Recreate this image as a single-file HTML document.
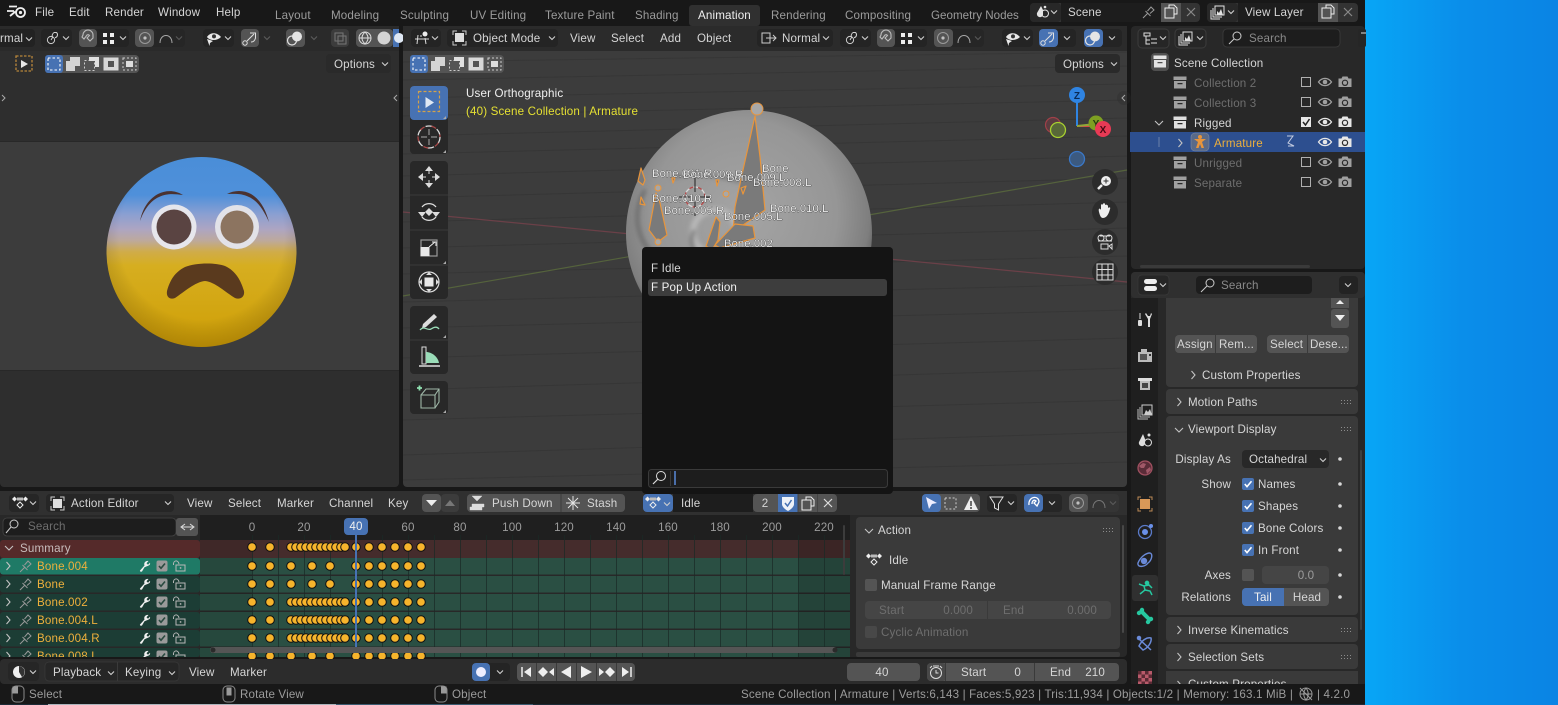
<!DOCTYPE html>
<html><head><meta charset="utf-8"><title>Blender</title>
<style>
html,body{margin:0;padding:0;width:1558px;height:705px;overflow:hidden;background:#181818}
svg{display:block}
text{font-family:"Liberation Sans",sans-serif;font-size:11.6px;fill:#d6d6d6;letter-spacing:.15px}
.d{fill:#8a8a8a}.w{fill:#f0f0f0}.m{fill:#9c9c9c}.g{fill:#6e6e6e}.o{fill:#eeb03c}.c{text-anchor:middle}.e{text-anchor:end}
.b{font-size:11.2px;fill:#ececec;stroke:#2a2a2a;stroke-width:.6px;paint-order:stroke;letter-spacing:.12px}
</style></head><body>
<svg width="1558" height="705" viewBox="0 0 1558 705" xmlns="http://www.w3.org/2000/svg">
<defs>
<filter id="bl2" x="-20%" y="-20%" width="140%" height="140%"><feGaussianBlur stdDeviation="2"/></filter>
<filter id="bl1" x="-20%" y="-20%" width="140%" height="140%"><feGaussianBlur stdDeviation=".6"/></filter>
<linearGradient id="win" x1="0" x2="1" y1="0" y2="0"><stop offset="0" stop-color="#08a6f6"/><stop offset=".5" stop-color="#0a8eea"/><stop offset="1" stop-color="#0a84e4"/></linearGradient>
<radialGradient id="sph" cx=".48" cy=".42" r=".58"><stop offset="0" stop-color="#a4a4a4"/><stop offset=".65" stop-color="#969696"/><stop offset=".88" stop-color="#7e7e7e"/><stop offset="1" stop-color="#505050"/></radialGradient>
<linearGradient id="emo" x1="0" x2="0" y1="0" y2="1"><stop offset="0" stop-color="#4a8ed8"/><stop offset=".2" stop-color="#4f90da"/><stop offset=".3" stop-color="#8a9fd2"/><stop offset=".38" stop-color="#ada5c2"/><stop offset=".44" stop-color="#bda99c"/><stop offset=".5" stop-color="#d0ac48"/><stop offset=".57" stop-color="#d6ae20"/><stop offset="1" stop-color="#cf9f06"/></linearGradient>
<radialGradient id="emos" cx=".5" cy=".42" r=".58"><stop offset=".75" stop-color="#000" stop-opacity="0"/><stop offset="1" stop-color="#3a2000" stop-opacity=".2"/></radialGradient>

<path id="cd" d="M-3-1.500 0 1.500 3-1.500" fill="none" stroke="#d0d0d0" stroke-width="1.100"/>
<path id="cr" d="M-1.500-4 2 0-1.500 4" fill="none" stroke="#c4c4c4" stroke-width="1.100"/>
<path id="cdl" d="M-4-2 0 2 4-2" fill="none" stroke="#c4c4c4" stroke-width="1.100"/>
<circle id="k" r="4.300" fill="#f6b42c" stroke="#111" stroke-width="1"/>
<g id="dense"><use href="#k" x="291"/><use href="#k" x="296"/><use href="#k" x="301"/><use href="#k" x="306"/><use href="#k" x="311"/><use href="#k" x="316"/><use href="#k" x="321"/><use href="#k" x="326"/><use href="#k" x="331"/><use href="#k" x="336"/><use href="#k" x="341"/><use href="#k" x="345"/></g>
<g id="tail"><use href="#k" x="252"/><use href="#k" x="270"/><use href="#k" x="356"/><use href="#k" x="369"/><use href="#k" x="382"/><use href="#k" x="395"/><use href="#k" x="408"/><use href="#k" x="421"/></g>
<g id="sparse"><use href="#k" x="291"/><use href="#k" x="312"/><use href="#k" x="330"/></g>
<g id="col"><rect x="-6.500" y="-6.500" width="13" height="3.500" fill="currentColor"/><path d="M-6-2H6V5.500H-6Z M-2.500 0V1.300H2.500V0Z" fill="currentColor" fill-rule="evenodd"/></g>
<g id="eye"><path d="M-6.500 0C-3-4.800 3-4.800 6.500 0 3 4.800-3 4.800-6.500 0Z" fill="none" stroke="currentColor" stroke-width="1.300"/><circle r="2.300" fill="currentColor"/></g>
<g id="cam"><path d="M-6.500-3.500H-3.500L-2.500-5.500H2.500L3.500-3.500H6.500V5H-6.500Z" fill="currentColor"/><circle cy=".8" r="3.200" fill="#2a2a2a"/><circle cy=".8" r="2" fill="currentColor"/></g>
<g id="wr"><path d="M-5 4.500-.5-.5C-1.500-3 .5-5.500 3.500-5L1.500-2.800 3-1.200 5-3.300C5.700-.5 3-.5-.5 1.300L-3 5.500C-4 6-5.500 5.500-5 4.500Z" fill="#f0f0f0"/></g>
<g id="pin"><path d="M-6 6-1.500 1.500M-3.500-1 1.500 4M-1.500-1 2-5 5-2 1 1.500" fill="none" stroke="#9a9a9a" stroke-width="1"/></g>
<g id="lk"><rect x="-2" y="-1" width="9" height="6" fill="none" stroke="#b8b8b8" stroke-width="1"/><path d="M-4.500-1C-5-6 0-6.500 1-2" fill="none" stroke="#b8b8b8" stroke-width="1"/><rect x="1.800" y="1.200" width="1.500" height="1.500" fill="#b8b8b8"/></g>
<g id="chk"><rect x="-5.500" y="-5.500" width="11" height="11" rx="2" fill="#9a9a9a"/><path d="M-3 0-1 2.300 3-2.500" fill="none" stroke="#2a4a40" stroke-width="1.600"/></g>
<g id="cb"><rect x="-6" y="-6" width="12" height="12" rx="2" fill="#4772b3"/><path d="M-3.200 0-1 2.600 3.500-2.800" fill="none" stroke="#fff" stroke-width="1.600"/></g>
<g id="grip" fill="#8c8c8c"><rect x="0" y="0" width="1" height="1"/><rect x="3" y="0" width="1" height="1"/><rect x="6" y="0" width="1" height="1"/><rect x="9" y="0" width="1" height="1"/><rect x="0" y="3" width="1" height="1"/><rect x="3" y="3" width="1" height="1"/><rect x="6" y="3" width="1" height="1"/><rect x="9" y="3" width="1" height="1"/></g>
<g id="link"><circle cx="-2" cy="2" r="3.600" fill="none" stroke="#d0d0d0"/><path d="M1-5.500H3.500A3 3 0 0 1 2-.3" fill="none" stroke="#d0d0d0"/><path d="M-2 2-.5-.5A4 4 0 0 1 1-5.500" fill="none" stroke="#d0d0d0"/></g>
<g id="mag"><path d="M-5-3A5 5 0 0 1 5-3L5 0 2 3-1 0 1.500-2.500A2 2 0 0 0-1-3L-4 1-6-1Z" fill="none" stroke="#bdbdbd" stroke-width="1.100"/></g>
<g id="grid4"><rect x="-5" y="-5" width="4" height="4" fill="#eee"/><rect x="2" y="-5" width="4" height="4" fill="#eee"/><rect x="-5" y="2" width="4" height="4" fill="#eee"/><rect x="2" y="2" width="4" height="4" fill="#eee"/></g>
<g id="prop"><circle r="5.500" fill="none" stroke="#9a9a9a"/><circle r="1.600" fill="#c0c0c0"/></g>
<path id="curve" d="M-6 5C-6-5 6-5 6 5" fill="none" stroke="#a8a8a8"/>
<path id="curved" d="M-6 5C-6-5 6-5 6 5" fill="none" stroke="#777"/>
<g id="vis"><path d="M-7-1C-4-6 3-6 7-1 3 3-4 3-7-1Z" fill="#e8e8e8"/><circle cy="-1.600" r="2" fill="#333"/><path d="M-7 1-1 3-4 5-4.500 8Z" fill="#e8e8e8"/></g>
<g id="bn"><circle cx="-5" cy="5" r="2.200" fill="none" stroke="#e0e0e0"/><path d="M-3 3 4-4M0-5H5.500V.5M1 4C4 4 5 2 5.500 0" fill="none" stroke="#e0e0e0"/></g>
<g id="ovl"><circle cx="2" cy="-1.500" r="5" fill="#e4e4e4"/><circle cx="-3" cy="2.500" r="4.500" fill="none" stroke="#e4e4e4" stroke-width="1.200"/></g>
<g id="dash"><rect x="-6" y="-6" width="12" height="12" fill="none" stroke="#fff" stroke-dasharray="2.500 2" stroke-width="1.100"/></g>
<g id="keys"><path d="M-8-2-5.500-4.500-3-2-5.500.5ZM8-2 5.500-4.500 3-2 5.500.5Z" fill="#eee"/><rect x="-3" y="-3.500" width="6" height="3" fill="#bbb"/><path d="M0 1 3 4 0 7-3 4Z" fill="none" stroke="#eee"/></g>
<g id="copy"><rect x="-5" y="-3" width="9" height="10" fill="none" stroke="#eee"/><path d="M-1-3V-6H4L7-3V3H4" fill="none" stroke="#eee"/></g>
<path id="xx" d="M-4-4 4 4M4-4-4 4" stroke="#ddd" stroke-width="1.200" fill="none"/>
</defs>

<!-- base -->
<rect width="1558" height="705" fill="#181818"/>
<rect x="1365" width="193" height="705" fill="url(#win)"/>
<rect x="0" y="704" width="1365" height="1" fill="#1c2a36"/><rect x="48" y="704" width="288" height="1" fill="#aab4bc"/><rect x="336" y="704" width="197" height="1" fill="#3a5a70"/>

<!-- top bar -->
<g fill="none" stroke="#eee"><circle cx="20.500" cy="12.500" r="4.500" stroke-width="1.800"/><path d="M9 6.500H17M7 11H14M10 16 15.500 11.500" stroke-width="1.800"/></g><circle cx="20.500" cy="12.500" r="1.600" fill="#eee"/>
<text x="35" y="16">File</text><text x="69" y="16">Edit</text><text x="105" y="16">Render</text><text x="158" y="16">Window</text><text x="216" y="16">Help</text>
<rect x="689" y="5" width="71" height="21" rx="3" fill="#303030"/>
<text class="m" x="275" y="19">Layout</text><text class="m" x="331" y="19">Modeling</text><text class="m" x="400" y="19">Sculpting</text><text class="m" x="470" y="19">UV Editing</text><text class="m" x="545" y="19">Texture Paint</text><text class="m" x="635" y="19">Shading</text><text class="w" x="698" y="19">Animation</text><text class="m" x="771" y="19">Rendering</text><text class="m" x="845" y="19">Compositing</text><text class="m" x="931" y="19" textLength="88">Geometry Nodes</text>
<!-- scene -->
<rect x="1030" y="3" width="170" height="19" rx="4" fill="#333"/>
<rect x="1030" y="3" width="31" height="19" rx="4" fill="#282828"/>
<g transform="translate(1042,12)"><path d="M-1-6-5 1A3 3 0 0 0 1 3L1-2Z" fill="#e4e4e4"/><circle cx="3" cy="1.500" r="3.500" fill="none" stroke="#e4e4e4"/><circle cx="3" cy="-5" r="1.300" fill="#e4e4e4"/></g><use href="#cd" x="1054" y="12"/>
<rect x="1061" y="3" width="100" height="19" fill="#1d1d1d"/><text x="1068" y="16">Scene</text>
<use href="#pin" x="1149" y="12"/>
<rect x="1161" y="3" width="20" height="19" fill="#545454"/><use href="#copy" x="1170" y="11"/><use href="#xx" x="1191" y="12" opacity=".5"/>
<rect x="1207" y="3" width="151" height="19" rx="4" fill="#333"/>
<rect x="1207" y="3" width="31" height="19" rx="4" fill="#282828"/>
<g transform="translate(1218,12)"><rect x="-3" y="-6" width="9" height="9" fill="none" stroke="#e4e4e4"/><path d="M-1 3-1-1 1 1 3-3 5 3Z" fill="#e4e4e4"/><path d="M-5-4V5H4M-7-2V7H2" fill="none" stroke="#e4e4e4"/></g><use href="#cd" x="1231" y="12"/>
<rect x="1238" y="3" width="80" height="19" fill="#1d1d1d"/><text x="1245" y="16">View Layer</text>
<rect x="1318" y="3" width="20" height="19" fill="#545454"/><use href="#copy" x="1327" y="11"/><use href="#xx" x="1348" y="12" opacity=".5"/>

<!-- left viewport -->
<rect x="0" y="26" width="399" height="461" rx="4" fill="#2e2e2e"/>
<rect x="0" y="26" width="399" height="25" fill="#2a2a2a"/>
<rect x="0" y="141" width="399" height="230" fill="#3c3c3c"/>
<rect x="0" y="141" width="399" height="1" fill="#282828"/>
<rect x="0" y="370" width="399" height="1" fill="#282828"/>
<!-- left header -->
<rect x="-4" y="29" width="39" height="18" rx="4" fill="#222"/><text x="0" y="42">rmal</text><use href="#cd" x="29" y="39"/>
<rect x="41" y="29" width="31" height="18" rx="4" fill="#242424"/><use href="#link" x="53" y="38"/><use href="#cd" x="66" y="38"/>
<rect x="79" y="29" width="50" height="18" rx="4" fill="#242424"/><rect x="79" y="29" width="18" height="18" rx="4" fill="#545454"/><use href="#mag" x="88" y="38"/><use href="#grid4" x="108" y="38"/><use href="#cd" x="123" y="38"/>
<rect x="135" y="29" width="50" height="18" rx="4" fill="#262626"/><rect x="135" y="29" width="19" height="18" rx="4" fill="#545454"/><use href="#prop" x="145" y="38"/><use href="#curve" x="166" y="38"/><use href="#cd" x="179" y="38" opacity=".3"/>
<rect x="203" y="29" width="31" height="18" rx="4" fill="#242424"/><use href="#vis" x="214" y="38"/><use href="#cd" x="228" y="38"/>
<rect x="241" y="29" width="44" height="18" rx="4" fill="#2a2a2a"/><rect x="241" y="29" width="18" height="18" rx="4" fill="#545454"/><use href="#bn" x="250" y="38"/><use href="#cd" x="267" y="38" opacity=".3"/>
<rect x="286" y="29" width="37" height="18" rx="4" fill="#2a2a2a"/><rect x="286" y="29" width="19" height="18" rx="4" fill="#545454"/><use href="#ovl" x="295" y="38"/><use href="#cd" x="314" y="38" opacity=".3"/>
<rect x="331" y="29" width="18" height="18" rx="4" fill="#3c3c3c"/><rect x="335" y="33" width="8" height="8" fill="none" stroke="#777"/><rect x="338" y="36" width="8" height="8" fill="none" stroke="#777"/>
<rect x="356" y="29" width="37" height="18" rx="4" fill="#545454"/><circle cx="365" cy="38" r="6" fill="none" stroke="#ddd"/><path d="M359 38H371M365 32C361 36 361 40 365 44 369 40 369 36 365 32" fill="none" stroke="#ddd"/><circle cx="384" cy="38" r="6.500" fill="#d4d4d4"/>
<rect x="393" y="29" width="6" height="18" fill="#4772b3"/><circle cx="399" cy="38" r="5" fill="#dfe8f4"/>
<rect x="16" y="56" width="16" height="15" fill="none" stroke="#b8863a" stroke-dasharray="2.500 1.500" stroke-width="1.300"/><path d="M21 60 28 64 21 68Z" fill="#e8e8e8"/>
<!-- select modes left -->
<g id="modes"><rect x="45" y="55" width="94" height="18" rx="4" fill="#545454"/><rect x="45" y="55" width="18" height="18" rx="3" fill="#4772b3"/><use href="#dash" x="54" y="64"/><rect x="66" y="61" width="9" height="10" fill="#d4d4d4"/><rect x="70" y="57" width="10" height="9" fill="#d4d4d4"/><rect x="84.500" y="60.500" width="10" height="10" fill="none" stroke="#ccc" stroke-dasharray="2 2"/><path d="M89 57H99V67H95V61H89Z" fill="#e0e0e0"/><rect x="103.500" y="57.500" width="15" height="13" fill="#d8d8d8"/><rect x="108" y="61" width="6" height="6" fill="#545454"/><rect x="123" y="58" width="13" height="12" fill="none" stroke="#ccc" stroke-dasharray="2 2"/><rect x="126" y="61" width="7" height="6" fill="#ddd"/></g>
<rect x="326" y="54" width="65" height="19" rx="4" fill="#2a2a2a"/><text x="334" y="68">Options</text><use href="#cd" x="385" y="64"/>
<path d="M2 95 5 98 2 101" fill="none" stroke="#aaa"/><path d="M397 95 394 98 397 101" fill="none" stroke="#aaa"/>
<!-- emoji -->
<circle cx="201.500" cy="252" r="95" fill="url(#emo)"/><circle cx="201.500" cy="252" r="95" fill="url(#emos)"/>
<circle cx="174" cy="227" r="22.500" fill="#e6e6ec"/><circle cx="174" cy="227" r="17.500" fill="#5a4442"/>
<circle cx="237" cy="227" r="22" fill="#e2e2e8"/><circle cx="237" cy="227" r="16.500" fill="#8c7460"/>
<path d="M183 195C175 190 166 190 158 194 147 200 142 211 140 221 144 210 150 201 159 197 167 193 175 194 183 195Z" fill="#4a3230"/>
<path d="M227 194C234 190 244 190 251 194 261 200 266 211 269 222 264 211 258 201 249 197 241 193 234 194 227 194Z" fill="#4a3230"/>
<path d="M167 291C170 280 175 272 185 267 195 263 214 262 225 266 236 271 241 281 244 291 245 297 240 300 235 298 225 292 215 282 205 281 195 282 184 292 175 298 170 300 166 297 167 291Z" fill="#5a3a1e"/>

<!-- main viewport -->
<rect x="403" y="26" width="724" height="461" rx="4" fill="#3c3c3c"/>
<g stroke="#353535" stroke-width="1" opacity=".8"><path d="M403 62 1127 52M403 80 1127 66M403 98 1127 84M403 116 1127 100M403 136 1127 118M403 154 1127 136M403 176 1127 156M403 198 1127 178M403 222 1127 202M403 248 1127 228M403 274 1127 256M403 302 1127 284M403 328 1127 310M403 358 1127 338M403 390 1127 368M403 420 1127 400M403 455 1127 432M403 480 1127 462"/></g>
<path d="M403 212 1127 282" stroke="#6b4048" stroke-width="1.200"/><path d="M403 296 1127 170" stroke="#55633c" stroke-width="1.200"/>
<rect x="403" y="26" width="724" height="25" fill="#2b2b2b"/>
<!-- sphere -->
<circle cx="749" cy="233" r="123" fill="url(#sph)"/>
<g filter="url(#bl2)" fill="none"><path d="M645 190C632 212 636 236 652 254" stroke="#6e6e6e" stroke-width="4"/><path d="M672 178C690 172 720 175 740 182" stroke="#777" stroke-width="3"/><ellipse cx="715" cy="232" rx="22" ry="22" stroke="#b8b8b8" stroke-width="6"/><path d="M694 230C690 240 692 248 698 255" stroke="#707070" stroke-width="3"/></g>
<!-- bones -->
<g fill="#7a7a7a" stroke="#e8953c" stroke-width="1.200" stroke-linejoin="round">
<path d="M755 116 743 170 735 207 733 232 765 210 760 157Z"/>
<path d="M715 245 735 224 753 226 755 238 720 248Z"/>
<path d="M656 193 649 230 658 242 667 235 660 203Z"/>
<path d="M706 246 716 217 720 222 718 240 712 250Z"/>
<path d="M641 168 638 181 643 185 645 180Z"/>
<path d="M641 197 640 204 645 205Z"/>
<path d="M672 178 673 183 675 178ZM716 180 717 186 719 180ZM741 188 743 194 746 186Z"/>
</g>
<g fill="#a8a8a8" stroke="#e8953c"><circle cx="757" cy="109" r="6"/><circle cx="658" cy="188" r="3"/><circle cx="658" cy="242" r="3"/><circle cx="726" cy="194" r="3"/></g>
<circle cx="695" cy="197" r="10" fill="none" stroke="#d8d8d8" stroke-width="1.300" stroke-dasharray="5 4"/><circle cx="695" cy="197" r="10" fill="none" stroke="#b84848" stroke-width="1.300" stroke-dasharray="4 5" stroke-dashoffset="4"/>
<path d="M695 178V192M695 202V216M679 197H690M700 197H711" stroke="#222"/>
<text class="b" x="652" y="177">Bone.001.R</text><text class="b" x="683" y="178">Bone.009.R</text><text class="b" x="727" y="181">Bone.009.L</text><text class="b" x="762" y="172">Bone</text><text class="b" x="753" y="186">Bone.008.L</text>
<text class="b" x="652" y="202">Bone.010.R</text><text class="b" x="664" y="214">Bone.005.R</text><text class="b" x="770" y="212">Bone.010.L</text><text class="b" x="724" y="220">Bone.005.L</text><text class="b" x="724" y="247">Bone.002</text>
<!-- main header -->
<rect x="411" y="29" width="30" height="18" rx="4" fill="#242424"/><g transform="translate(422,38)"><circle cx="3" cy="-4" r="2.500" fill="#eee"/><path d="M-7 1H7M-4-3-5 6M3 0 4 6M-2-2H0" stroke="#ddd" fill="none"/></g><use href="#cd" x="435" y="38"/>
<rect x="447" y="29" width="111" height="18" rx="4" fill="#242424"/><rect x="455" y="33" width="9" height="9" fill="#ddd"/><path d="M453 35V31H457M462 31H466V35M466 41V45H462M457 45H453V41" fill="none" stroke="#ccc"/><text x="473" y="42">Object Mode</text><use href="#cd" x="552" y="38"/>
<text x="570" y="42">View</text><text x="611" y="42">Select</text><text x="660" y="42">Add</text><text x="697" y="42">Object</text>
<rect x="757" y="29" width="76" height="18" rx="4" fill="#242424"/><path d="M762 33H770V43H762ZM766 38H776M773 35 776 38 773 41" fill="none" stroke="#ccc"/><text x="782" y="42">Normal</text><use href="#cd" x="826" y="38"/>
<rect x="840" y="29" width="31" height="18" rx="4" fill="#242424"/><use href="#link" x="852" y="38"/><use href="#cd" x="865" y="38"/>
<rect x="877" y="29" width="50" height="18" rx="4" fill="#242424"/><rect x="877" y="29" width="18" height="18" rx="4" fill="#545454"/><use href="#mag" x="886" y="38"/><use href="#grid4" x="906" y="38"/><use href="#cd" x="921" y="38"/>
<rect x="934" y="29" width="50" height="18" rx="4" fill="#262626"/><rect x="934" y="29" width="19" height="18" rx="4" fill="#545454"/><use href="#prop" x="943" y="38"/><use href="#curve" x="964" y="38"/><use href="#cd" x="978" y="38" opacity=".3"/>
<rect x="1002" y="29" width="31" height="18" rx="4" fill="#242424"/><use href="#vis" x="1013" y="38"/><use href="#cd" x="1027" y="38"/>
<rect x="1039" y="29" width="37" height="18" rx="4" fill="#242424"/><rect x="1039" y="29" width="19" height="18" rx="4" fill="#4772b3"/><use href="#bn" x="1048" y="38"/><use href="#cd" x="1067" y="38"/>
<rect x="1084" y="29" width="38" height="18" rx="4" fill="#242424"/><rect x="1084" y="29" width="19" height="18" rx="4" fill="#4772b3"/><use href="#ovl" x="1093" y="38"/><use href="#cd" x="1112" y="38"/>
<use href="#modes" x="365"/>
<rect x="1055" y="54" width="65" height="19" rx="4" fill="#2a2a2a"/><text x="1063" y="68">Options</text><use href="#cd" x="1114" y="64"/>
<!-- tools -->
<rect x="410" y="86" width="38" height="68" rx="4" fill="#282828"/><rect x="410" y="86" width="38" height="34" rx="4" fill="#4772b3"/>
<rect x="418.500" y="91.500" width="21" height="20" fill="none" stroke="#d4a24a" stroke-dasharray="3 2" stroke-width="1.200"/><path d="M425.500 97 434 102.500 425.500 108Z" fill="#dfe8f4"/>
<g transform="translate(429,137)"><circle r="11" fill="none" stroke="#ddd" stroke-width="1.300" stroke-dasharray="7 5"/><circle r="11" fill="none" stroke="#a84848" stroke-width="1.300" stroke-dasharray="5 7" stroke-dashoffset="6"/><path d="M-8 0H-2M2 0H8M0-8V-2M0 2V8" stroke="#aaa"/></g>
<rect x="410" y="161" width="38" height="138" rx="4" fill="#282828"/>
<path d="M410 195H448M410 230H448M410 265H448" stroke="#3a3a3a"/>
<g transform="translate(429,177)" fill="#ddd"><path d="M0-11 4-6H-4ZM0 11 4 6H-4ZM-11 0-6-4V4ZM11 0 6-4V4Z"/><path d="M-6 0H-3M3 0H6M0-6V-3M0 3V6" stroke="#ddd"/></g>
<g transform="translate(429,212)"><path d="M-7-5A9 9 0 0 1 7-5M7 5A9 9 0 0 1-7 5" fill="none" stroke="#ddd" stroke-width="1.300"/><path d="M-11 0-7 5-3 0ZM11 0 7 5 3 0ZM0-4 4 0 0 4-4 0Z" fill="#ddd"/></g>
<g transform="translate(429,248)"><rect x="-8" y="-8" width="16" height="16" fill="none" stroke="#999" stroke-width="1.200"/><rect x="-8.500" y="-1" width="9" height="9" fill="#e8e8e8"/><path d="M0-1 6-6M3-6H7V-2" stroke="#eee" fill="none"/></g>
<g transform="translate(429,282)"><circle r="10" fill="none" stroke="#ddd" stroke-width="1.200"/><rect x="-4.500" y="-4.500" width="9" height="9" fill="#e8e8e8"/><path d="M0-10 3-7H-3ZM0 10 3 7H-3ZM-10 0-7-3V3ZM10 0 7-3V3Z" fill="#ddd"/></g>
<rect x="410" y="306" width="38" height="68" rx="4" fill="#282828"/><path d="M410 340H448" stroke="#3a3a3a"/>
<g transform="translate(429,322)"><path d="M-6 2 5-8 8-5-3 5-7 6Z" fill="#ddd"/><path d="M-9 8C-5 3-2 9 2 7 5 5 8 4 10 7" fill="none" stroke="#9adcb8" stroke-width="1.300"/></g>
<g transform="translate(429,358)"><path d="M-7-11H-3V6H-7Z" fill="none" stroke="#ddd"/><path d="M-3-6C3-6 9-1 10 5H-3Z" fill="#9adcb8"/><path d="M-10 8H11" stroke="#ddd" stroke-width="1.500"/></g>
<rect x="410" y="381" width="38" height="33" rx="4" fill="#282828"/>
<g transform="translate(429,398)"><path d="M-8-3H6V10H-8ZM-8-3-3-9H10V4L6 10M6-3 10-9" fill="none" stroke="#9fb8a8" stroke-width="1.100"/><path d="M-12-10H-7M-9.500-12.500V-7.500" stroke="#8fe0b0" stroke-width="1.800"/></g>
<path d="M446 116V119H443ZM446 150V153H443ZM446 261V264H443ZM446 335V338H443ZM446 410V413H443Z" fill="#aaa"/>
<!-- overlay text -->
<text class="w" x="466" y="97">User Orthographic</text>
<text x="466" y="115" style="fill:#e5e033">(40) Scene Collection | Armature</text>
<!-- gizmo -->
<path d="M1077 96V126" stroke="#2f84e2" stroke-width="2"/><path d="M1077 126H1102" stroke="#d84848" stroke-width="2"/><path d="M1077 126 1096 124" stroke="#90a838" stroke-width="2"/>
<circle cx="1053" cy="125" r="7.500" fill="#5a3c40" stroke="#a04048" stroke-width="1.200"/><circle cx="1058" cy="130" r="7.500" fill="#586838" stroke="#a8d030" stroke-width="1.300"/>
<circle cx="1096" cy="123" r="7.500" fill="#7ea022"/><text x="1096" y="127" class="c" style="font-size:10px;fill:#2a3a10;font-weight:bold">Y</text>
<circle cx="1103" cy="129" r="8" fill="#e83a55"/><text x="1103" y="133" class="c" style="font-size:10px;fill:#4a0a14;font-weight:bold">X</text>
<circle cx="1077" cy="95" r="8" fill="#2f84e2"/><text x="1077" y="99" class="c" style="font-size:10px;fill:#0a2a55;font-weight:bold">Z</text>
<circle cx="1077" cy="159" r="7.500" fill="#3c5a80" stroke="#3a78c8" stroke-width="1.300"/>
<!-- nav buttons -->
<g fill="#2c2c2c"><circle cx="1105" cy="182" r="13"/><circle cx="1105" cy="212" r="13"/><circle cx="1105" cy="242" r="13"/><circle cx="1105" cy="272" r="13"/></g>
<circle cx="1106" cy="181" r="5" fill="#eee"/><path d="M1103.500 181H1108.500M1106 178.500V183.500" stroke="#333"/><path d="M1102 185 1098 189" stroke="#eee" stroke-width="2.500"/>
<path d="M1099 212C1098 208 1100 208 1101 210V205C1101 204 1103 204 1103 205V204C1103 203 1105 203 1105 204V205C1106 204 1108 205 1108 206V208C1109 207 1111 207 1110 209 1109 213 1107 218 1103 218 1101 218 1100 216 1099 212Z" fill="#eee"/>
<g fill="none" stroke="#ddd"><circle cx="1101" cy="238" r="3"/><circle cx="1109" cy="238" r="3"/><path d="M1098 241H1112M1100 236H1110"/><rect x="1101" y="244" width="7" height="5"/><path d="M1109 246 1112 244V249Z"/></g>
<g stroke="#ddd" fill="none"><rect x="1097" y="264" width="16" height="16"/><path d="M1102 264V280M1108 264V280M1097 269.500H1113M1097 275H1113"/></g>
<circle cx="1124" cy="98" r="7" fill="#2a2a2a" opacity=".3"/><path d="M1125 95 1122 98 1125 101" fill="none" stroke="#aaa"/>

<!-- outliner -->
<rect x="1131" y="26" width="234" height="243" rx="4" fill="#282828"/>
<rect x="1138" y="29" width="31" height="19" rx="4" fill="#262626" stroke="#3c3c3c"/><path d="M1144 33H1150V36H1144ZM1146 36V44H1150M1146 40H1150M1151 39H1157M1151 43H1157" stroke="#ddd" fill="none"/><use href="#cd" x="1163" y="38"/>
<rect x="1175" y="29" width="31" height="19" rx="4" fill="#262626" stroke="#3c3c3c"/><g transform="translate(1186,38)"><rect x="-3" y="-6" width="9" height="9" fill="none" stroke="#ddd"/><path d="M-1 3-1-1 1 1 3-3 5 3Z" fill="#ddd"/><path d="M-5-4V5H4M-7-2V7H2" fill="none" stroke="#ddd"/></g><use href="#cd" x="1200" y="38"/>
<rect x="1223" y="29" width="117" height="18" rx="4" fill="#1d1d1d" stroke="#3c3c3c" stroke-width=".8"/><circle cx="1237" cy="36" r="4" fill="none" stroke="#ccc"/><path d="M1234 39 1229 44" stroke="#ccc"/><text class="d" x="1249" y="42">Search</text>
<rect x="1358" y="29" width="8" height="18" rx="2" fill="#262626"/><path d="M1361 33H1366" stroke="#ddd"/>
<rect x="1151" y="53" width="18" height="18" rx="4" fill="#505050"/><use href="#col" x="1160" y="62" style="color:#e4e4e4"/><text x="1174" y="67">Scene Collection</text>
<use href="#col" x="1180" y="83" style="color:#a0a0a0"/><text class="g" x="1194" y="87">Collection 2</text>
<use href="#col" x="1180" y="103" style="color:#a0a0a0"/><text class="g" x="1194" y="107">Collection 3</text>
<use href="#cdl" x="1159" y="123"/><use href="#col" x="1180" y="123" style="color:#e0e0e0"/><text x="1194" y="127">Rigged</text>
<rect x="1130" y="132" width="235" height="20" fill="#2d4f8f"/>
<path d="M1159 137V147" stroke="#6a80a8"/><use href="#cr" x="1180" y="143"/>
<rect x="1191" y="133" width="18" height="18" rx="4" fill="#5a6a88" stroke="#7a8aa8" stroke-width=".6"/><g transform="translate(1200,142)" fill="#e8953c"><circle cy="-5" r="2"/><path d="M-6-3H6L2 0 4 6H1.500L0 2-1.500 6H-4L-2 0Z"/></g>
<text class="o" x="1214" y="147">Armature</text><path d="M1287 136H1293L1288 143 1294 146H1288" fill="none" stroke="#c4cce0"/>
<use href="#col" x="1180" y="163" style="color:#a0a0a0"/><text class="g" x="1194" y="167">Unrigged</text>
<use href="#col" x="1180" y="183" style="color:#a0a0a0"/><text class="g" x="1194" y="187">Separate</text>
<g fill="none" stroke="#b0b0b0"><rect x="1301.500" y="77.500" width="9" height="9"/><rect x="1301.500" y="97.500" width="9" height="9"/><rect x="1301.500" y="157.500" width="9" height="9"/><rect x="1301.500" y="177.500" width="9" height="9"/></g>
<rect x="1301" y="117" width="10" height="10" fill="#e8e8e8"/><path d="M1303 122 1305.500 125 1309.500 119" stroke="#222" stroke-width="1.500" fill="none"/>
<g style="color:#a0a0a0"><use href="#eye" x="1325" y="82"/><use href="#cam" x="1345" y="82"/><use href="#eye" x="1325" y="102"/><use href="#cam" x="1345" y="102"/><use href="#eye" x="1325" y="162"/><use href="#cam" x="1345" y="162"/><use href="#eye" x="1325" y="182"/><use href="#cam" x="1345" y="182"/></g>
<g style="color:#e8e8e8"><use href="#eye" x="1325" y="122"/><use href="#cam" x="1345" y="122"/><use href="#eye" x="1325" y="142"/><use href="#cam" x="1345" y="142"/></g>
<rect x="1140" y="265" width="170" height="3" rx="1.500" fill="#3a3a3a"/>

<!-- properties -->
<rect x="1131" y="272" width="234" height="415" rx="4" fill="#282828"/>
<rect x="1131" y="272" width="234" height="26" rx="4" fill="#2f2f2f"/>
<rect x="1131" y="298" width="27" height="387" fill="#1f1f1f"/>
<rect x="1138" y="275" width="31" height="20" rx="4" fill="#262626" stroke="#3a3a3a" stroke-width=".7"/><rect x="1144" y="279" width="13" height="5" rx="2.500" fill="#eee"/><rect x="1144" y="286" width="13" height="5" rx="2.500" fill="#eee"/><use href="#cd" x="1163" y="285"/>
<rect x="1196" y="276" width="116" height="18" rx="4" fill="#1d1d1d"/><circle cx="1210" cy="283" r="4" fill="none" stroke="#ccc"/><path d="M1207 286 1201 292" stroke="#ccc"/><text class="d" x="1221" y="289">Search</text>
<rect x="1339" y="276" width="19" height="18" rx="4" fill="#232323"/><use href="#cd" x="1348" y="285"/>
<!-- panels -->
<path d="M1166 298H1358V383A4 4 0 0 1 1354 387H1170A4 4 0 0 1 1166 383Z" fill="#3a3a3a"/>
<rect x="1331" y="298" width="18" height="10" fill="#545454"/><path d="M1336 304H1344L1340 300Z" fill="#eee"/>
<rect x="1331" y="309" width="18" height="19" rx="3" fill="#545454"/><path d="M1335 315H1345L1340 321Z" fill="#eee"/>
<rect x="1175" y="335" width="82" height="18" rx="4" fill="#545454"/><path d="M1215.500 335V353" stroke="#3a3a3a"/><text x="1177" y="348">Assign</text><text x="1219" y="348">Rem...</text>
<rect x="1267" y="335" width="82" height="18" rx="4" fill="#545454"/><path d="M1307.500 335V353" stroke="#3a3a3a"/><text x="1270" y="348">Select</text><text x="1310" y="348">Dese...</text>
<use href="#cr" x="1193" y="375"/><text x="1202" y="379">Custom Properties</text>
<rect x="1166" y="389" width="192" height="25" rx="4" fill="#3a3a3a"/><use href="#cr" x="1179" y="402"/><text x="1188" y="406">Motion Paths</text><use href="#grip" x="1341" y="400"/>
<rect x="1166" y="416" width="192" height="199" rx="4" fill="#3a3a3a"/><use href="#cdl" x="1179" y="430"/><text x="1188" y="433">Viewport Display</text><use href="#grip" x="1341" y="427"/>
<text class="e" x="1231" y="463">Display As</text><rect x="1242" y="450" width="87" height="18" rx="4" fill="#282828"/><text x="1249" y="463">Octahedral</text><use href="#cd" x="1323" y="460"/><circle cx="1340" cy="459" r="1.800" fill="#d8d8d8"/>
<text class="e" x="1231" y="488">Show</text>
<use href="#cb" x="1248" y="484"/><text x="1258" y="488">Names</text><circle cx="1340" cy="484" r="1.800" fill="#d8d8d8"/>
<use href="#cb" x="1248" y="506"/><text x="1258" y="510">Shapes</text><circle cx="1340" cy="506" r="1.800" fill="#d8d8d8"/>
<use href="#cb" x="1248" y="528"/><text x="1258" y="532">Bone Colors</text><circle cx="1340" cy="528" r="1.800" fill="#d8d8d8"/>
<use href="#cb" x="1248" y="550"/><text x="1258" y="554">In Front</text><circle cx="1340" cy="550" r="1.800" fill="#d8d8d8"/>
<text class="e" x="1231" y="579">Axes</text><rect x="1242" y="569" width="12" height="12" rx="2" fill="#545454"/><rect x="1262" y="566" width="67" height="18" rx="4" fill="#454545"/><text class="c m" x="1306" y="579">0.0</text><circle cx="1340" cy="575" r="1.800" fill="#d8d8d8"/>
<text class="e" x="1231" y="601">Relations</text><rect x="1242" y="588" width="87" height="18" rx="4" fill="#545454"/><path d="M1246 588H1284V606H1246A4 4 0 0 1 1242 602V592A4 4 0 0 1 1246 588Z" fill="#4772b3"/><text class="c w" x="1263" y="601">Tail</text><text class="c" x="1307" y="601">Head</text><circle cx="1340" cy="597" r="1.800" fill="#d8d8d8"/>
<rect x="1166" y="617" width="192" height="25" rx="4" fill="#3a3a3a"/><use href="#cr" x="1179" y="630"/><text x="1188" y="634">Inverse Kinematics</text><use href="#grip" x="1341" y="628"/>
<rect x="1166" y="644" width="192" height="25" rx="4" fill="#3a3a3a"/><use href="#cr" x="1179" y="657"/><text x="1188" y="661">Selection Sets</text><use href="#grip" x="1341" y="655"/>
<rect x="1166" y="671" width="192" height="16" fill="#3a3a3a"/><text x="1188" y="688">Custom Properties</text><use href="#cr" x="1179" y="685"/>
<rect x="1360" y="450" width="2" height="180" rx="1" fill="#3f3f3f"/>
<!-- tabs -->
<g transform="translate(1145,320)"><path d="M-5-7V-1" stroke="#ddd"/><rect x="-7" y="0" width="4" height="6" rx="1" fill="#ddd"/><path d="M3 7V-1L0-6 1-7 3-4 5-4 6-7 7-6 5-1V7Z" fill="#ddd"/></g>
<g transform="translate(1145,356)"><rect x="-7" y="-4" width="14" height="10" fill="#bbb"/><rect x="-4" y="-7" width="6" height="3" fill="#bbb"/><rect x="-5" y="-2" width="7" height="6" fill="#555"/><rect x="4" y="-2" width="2" height="2" fill="#333"/></g>
<g transform="translate(1145,384)"><rect x="-7" y="-6" width="14" height="3" fill="#ddd"/><rect x="-5" y="-3" width="10" height="9" fill="#bbb"/><rect x="-3" y="-1" width="6" height="5" fill="#444"/></g>
<g transform="translate(1145,412)"><rect x="-3" y="-7" width="10" height="10" fill="none" stroke="#ccc"/><path d="M-1 3 1-2 3 0 5-3 7 3Z" fill="#ccc"/><path d="M-5-5V5H5M-7-3V7H3" fill="none" stroke="#bbb"/></g>
<g transform="translate(1145,440)"><path d="M-2-6-6 2A3 3 0 0 0 0 4L0-1Z" fill="#ddd"/><circle cx="3" cy="2.500" r="3.500" fill="none" stroke="#ddd"/><circle cx="4" cy="-5" r="1.500" fill="#ddd"/></g>
<g transform="translate(1145,468)"><circle r="7" fill="#5a2c38" stroke="#a05060" stroke-width="1.300"/><path d="M-6-2-2-5 1-4-1 0-4 0ZM1 2 5-1 6 2 2 6Z" fill="#a05868"/></g>
<g transform="translate(1145,504)"><rect x="-5" y="-5" width="10" height="10" fill="#d89858"/><path d="M-7-4V-7H-4M4-7H7V-4M7 4V7H4M-4 7H-7V4" fill="none" stroke="#bb8855"/></g>
<g transform="translate(1145,532)"><circle r="6.500" fill="none" stroke="#5a7ac8" stroke-width="1.300"/><circle r="3" fill="#6a90e8"/><circle cx="6" cy="-6" r="2" fill="#6a90e8"/></g>
<g transform="translate(1145,560)" fill="none" stroke="#6a8ad8" stroke-width="1.400"><path d="M-7 3C-5-2 0-7 5-7 8-6 7 0 3 3 0 7-8 8-7 3Z"/><circle cx="-1" cy="1" r="2.500" fill="#6a8ad8"/></g>
<rect x="1132" y="575" width="26" height="26" rx="3" fill="#303030"/>
<g transform="translate(1145,588)" fill="none" stroke="#26c8a0" stroke-width="1.500"><circle cx="2" cy="-5" r="1.600" fill="#26c8a0"/><path d="M-6-4-1-2 4-3 7 0M-1-2 0 2-5 6M0 2 5 3 7 7"/></g>
<g transform="translate(1145,616)"><path d="M-5-6 6 5" stroke="#26c8a0" stroke-width="4"/><circle cx="-6" cy="-3" r="2.200" fill="#26c8a0"/><circle cx="-3" cy="-6" r="2.200" fill="#26c8a0"/><circle cx="6" cy="3" r="2.200" fill="#26c8a0"/><circle cx="3" cy="6" r="2.200" fill="#26c8a0"/></g>
<g transform="translate(1145,644)" fill="none" stroke="#6a8ad8" stroke-width="1.500"><path d="M-6-5 6 6M-6 2C-3-4 2-7 6-6 7-2 3 4-2 6Z"/><circle cx="-6" cy="-6" r="1.500" fill="#6a8ad8"/></g>
<g transform="translate(1138,671)"><rect width="14" height="14" fill="#b85a6a"/><path d="M0 0H3.500V3.500H0ZM7 0H10.500V3.500H7ZM3.500 3.500H7V7H3.500ZM10.500 3.500H14V7H10.500ZM0 7H3.500V10.500H0ZM7 7H10.500V10.500H7ZM3.500 10.500H7V14H3.500ZM10.500 10.500H14V14H10.500Z" fill="#5a2a34"/></g>
<rect x="0" y="684" width="1365" height="20" fill="#181818"/>

<!-- dopesheet -->
<rect x="0" y="491" width="1127" height="166" rx="4" fill="#282828"/>
<rect x="0" y="491" width="1127" height="24" fill="#303030"/>
<rect x="200" y="515" width="650" height="25" fill="#1f1f1f"/>
<rect x="0" y="515" width="200" height="25" fill="#282828"/>
<!-- rows right -->
<rect x="200" y="540" width="650" height="18" fill="#452c2c"/>
<g fill="#2a4f43"><rect x="200" y="558" width="650" height="16.500"/><rect x="200" y="576" width="650" height="16.500"/><rect x="200" y="594" width="650" height="16.500"/><rect x="200" y="612" width="650" height="16.500"/><rect x="200" y="630" width="650" height="16.500"/><rect x="200" y="648" width="650" height="9"/></g>
<rect x="798" y="540" width="52" height="117" fill="#000" opacity=".14"/>
<rect x="200" y="540" width="52" height="117" fill="#000" opacity=".08"/>
<g stroke="#1a2a26" stroke-width="1" opacity=".7"><path d="M252.500 535V657M278.500 535V657M304.500 535V657M330.500 535V657M382.500 535V657M408.500 535V657M434.500 535V657M460.500 535V657M486.500 535V657M512.500 535V657M538.500 535V657M564.500 535V657M590.500 535V657M616.500 535V657M642.500 535V657M668.500 535V657M694.500 535V657M720.500 535V657M746.500 535V657M772.500 535V657M798.500 535V657M824.500 535V657"/></g>
<text class="c m" x="252" y="531">0</text><text class="c m" x="304" y="531">20</text><text class="c m" x="408" y="531">60</text><text class="c m" x="460" y="531">80</text><text class="c m" x="512" y="531">100</text><text class="c m" x="564" y="531">120</text><text class="c m" x="616" y="531">140</text><text class="c m" x="668" y="531">160</text><text class="c m" x="720" y="531">180</text><text class="c m" x="772" y="531">200</text><text class="c m" x="824" y="531">220</text>
<!-- keys -->
<g transform="translate(0,547)"><use href="#tail"/><use href="#dense"/></g>
<g transform="translate(0,566)"><use href="#tail"/><use href="#sparse"/></g>
<g transform="translate(0,584)"><use href="#tail"/><use href="#sparse"/></g>
<g transform="translate(0,602)"><use href="#tail"/><use href="#dense"/></g>
<g transform="translate(0,620)"><use href="#tail"/><use href="#dense"/></g>
<g transform="translate(0,638)"><use href="#tail"/><use href="#dense"/></g>
<g transform="translate(0,656)"><use href="#tail"/><use href="#sparse"/></g>
<rect x="355" y="530" width="2" height="120" fill="#4772b3"/>
<rect x="344" y="518" width="24" height="17" rx="4" fill="#4772b3"/><text class="c w" x="356" y="530">40</text>
<rect x="210" y="647" width="627" height="6" rx="3" fill="#555"/><circle cx="213" cy="650" r="2.500" fill="#2a2a2a"/><circle cx="835" cy="650" r="2.500" fill="#2a2a2a"/>
<!-- channels -->
<rect x="3" y="518" width="173" height="18" rx="4" fill="#1d1d1d" stroke="#444" stroke-width=".8"/><circle cx="14" cy="524" r="4" fill="none" stroke="#ccc"/><path d="M11 527 6 533" stroke="#ccc"/><text class="g" x="28" y="530">Search</text>
<rect x="176" y="518" width="22" height="18" rx="3" fill="#545454"/><path d="M182 527H193M185 524 181 527 185 530M190 524 194 527 190 530" fill="none" stroke="#ddd"/>
<rect x="0" y="540" width="200" height="18" rx="3" fill="#552a2a"/><use href="#cdl" x="9" y="548"/><text x="20" y="552" style="fill:#c8bcbc">Summary</text>
<rect x="0" y="558" width="200" height="16.500" rx="3" fill="#1f7a66"/>
<g fill="#1c3d35"><rect y="576" width="200" height="16.500" rx="3"/><rect y="594" width="200" height="16.500" rx="3"/><rect y="612" width="200" height="16.500" rx="3"/><rect y="630" width="200" height="16.500" rx="3"/><rect y="648" width="200" height="9" rx="3"/></g>
<g id="ch"><use href="#cr" x="8" y="566"/><use href="#pin" x="26" y="566"/><use href="#wr" x="145" y="566"/><use href="#chk" x="162" y="566"/><use href="#lk" x="178" y="566"/></g>
<use href="#ch" y="18"/><use href="#ch" y="36"/><use href="#ch" y="54"/><use href="#ch" y="72"/>
<text class="o" x="37" y="570">Bone.004</text><text class="o" x="37" y="588">Bone</text><text class="o" x="37" y="606">Bone.002</text><text class="o" x="37" y="624">Bone.004.L</text><text class="o" x="37" y="642">Bone.004.R</text>
<svg x="0" y="648" width="200" height="9"><use href="#ch" y="90" transform="translate(0,-648)"/><text class="o" x="37" y="12">Bone.008.L</text></svg>
<!-- dope header -->
<rect x="9" y="494" width="30" height="18" rx="4" fill="#262626"/><use href="#keys" x="20" y="501"/><use href="#cd" x="33" y="503"/>
<rect x="46" y="494" width="128" height="18" rx="4" fill="#262626"/><rect x="53" y="499" width="9" height="9" fill="#ddd"/><path d="M51 501V497H55M60 497H64V501M64 506V510H60M55 510H51V506" fill="none" stroke="#ccc"/><text x="71" y="507">Action Editor</text><use href="#cd" x="168" y="503"/>
<text x="187" y="507">View</text><text x="228" y="507">Select</text><text x="277" y="507">Marker</text><text x="329" y="507">Channel</text><text x="388" y="507">Key</text>
<rect x="422" y="494" width="19" height="18" rx="4" fill="#545454"/><path d="M426 500H437L431.500 506Z" fill="#eee"/><rect x="441" y="494" width="18" height="18" rx="4" fill="#3c3c3c"/><path d="M445 506H455L450 500Z" fill="#777"/>
<rect x="467" y="494" width="158" height="18" rx="4" fill="#545454"/><path d="M561 494V512" stroke="#3c3c3c"/>
<path d="M472 496H482L477 501ZM472 504H484V507H472ZM470 507H482V510H470Z" fill="#ddd" stroke="#ddd" stroke-width=".4"/><text x="492" y="507">Push Down</text>
<path d="M566 503H580M573 496V510M568 498 578 508M578 498 568 508" stroke="#e4e4e4"/><text x="587" y="507">Stash</text>
<rect x="643" y="494" width="30" height="18" rx="4" fill="#4772b3"/><use href="#keys" x="653" y="501"/><use href="#cd" x="667" y="504"/>
<rect x="673" y="494" width="80" height="18" fill="#1d1d1d"/><text x="681" y="507">Idle</text>
<rect x="753" y="494" width="84" height="18" rx="4" fill="#545454"/><text class="c" x="765" y="507">2</text>
<rect x="778" y="494" width="20" height="18" fill="#4772b3"/><path d="M782 497H794V504C794 508 788 511 788 511 788 511 782 508 782 504Z" fill="#eef2f8"/><path d="M785 503 787.500 506 791.500 500" fill="none" stroke="#4772b3" stroke-width="1.500"/>
<path d="M798 494V512M817.500 494V512" stroke="#444"/><use href="#copy" x="807" y="503"/><use href="#xx" x="828" y="503"/>
<rect x="922" y="494" width="58" height="18" rx="4" fill="#545454"/><rect x="922" y="494" width="19" height="18" rx="4" fill="#4772b3"/><path d="M926 497 937 503 932 504 929 509Z" fill="#eef"/>
<rect x="945" y="498" width="11" height="11" fill="none" stroke="#ccc" stroke-dasharray="2 1.800"/><path d="M971 496 978 510H964Z" fill="#eee"/><path d="M971 501V506M971 507V509" stroke="#444" stroke-width="1.500"/>
<rect x="987" y="494" width="30" height="18" rx="4" fill="#262626"/><path d="M990 497H1003L998.500 504V510L994.500 508V504Z" fill="none" stroke="#e0e0e0"/><use href="#cd" x="1011" y="503"/>
<rect x="1024" y="494" width="38" height="18" rx="4" fill="#262626"/><rect x="1024" y="494" width="19" height="18" rx="4" fill="#4772b3"/><path d="M1029 505C1028 496 1039 495 1039 502L1037 506 1034 503 1036 501C1034 499 1032 501 1032 504" fill="none" stroke="#fff" stroke-width="1.300"/><use href="#cd" x="1052" y="503"/>
<rect x="1069" y="494" width="50" height="18" rx="4" fill="#353535"/><rect x="1069" y="494" width="19" height="18" rx="4" fill="#545454"/><use href="#prop" x="1078" y="503"/><use href="#curved" x="1099" y="503"/><use href="#cd" x="1113" y="503" opacity=".25"/>
<!-- sidebar -->
<rect x="856" y="517" width="264" height="132" rx="4" fill="#3a3a3a"/>
<rect x="856" y="652" width="264" height="5" rx="2" fill="#3a3a3a"/>
<use href="#cdl" x="869" y="531"/><text x="878" y="534">Action</text><use href="#grip" x="1103" y="528"/>
<use href="#keys" x="874" y="558"/><text x="889" y="564">Idle</text>
<rect x="865" y="579" width="12" height="12" rx="2" fill="#545454"/><text x="881" y="589">Manual Frame Range</text>
<rect x="865" y="601" width="246" height="18" rx="4" fill="#454545"/><path d="M987.500 601V619" stroke="#3a3a3a"/><text class="g" x="879" y="614">Start</text><text class="g e" x="973" y="614">0.000</text><text class="g" x="1003" y="614">End</text><text class="g e" x="1097" y="614">0.000</text>
<rect x="865" y="626" width="12" height="12" rx="2" fill="#484848"/><text class="g" x="881" y="636">Cyclic Animation</text>
<rect x="1122" y="525" width="2" height="108" rx="1" fill="#484848"/>
<rect x="843" y="525" width="2" height="50" rx="1" fill="#3c3c3c"/>

<!-- timeline -->
<rect x="0" y="659" width="1127" height="25" rx="4" fill="#2c2c2c"/>
<rect x="8" y="662" width="31" height="19" rx="4" fill="#262626"/><circle cx="19" cy="672" r="6" fill="#eee"/><path d="M19 672V666A6 6 0 0 1 22 677Z" fill="#333"/><use href="#cd" x="33" y="672"/>
<rect x="45" y="662" width="134" height="19" rx="4" fill="#262626" stroke="#3a3a3a" stroke-width=".7"/><path d="M117.500 662V681" stroke="#3a3a3a"/><text x="53" y="676">Playback</text><use href="#cd" x="111" y="673"/><text x="125" y="676">Keying</text><use href="#cd" x="172" y="673"/>
<text x="189" y="676">View</text><text x="230" y="676">Marker</text>
<rect x="472" y="663" width="38" height="18" rx="4" fill="#242424"/><rect x="472" y="663" width="18" height="18" rx="4" fill="#4772b3"/><circle cx="481" cy="672" r="5" fill="#eef"/><use href="#cd" x="500" y="672"/>
<rect x="517" y="663" width="118" height="18" rx="4" fill="#545454"/><path d="M536.500 663V681M556.500 663V681M576.500 663V681M596.500 663V681M616.500 663V681" stroke="#3a3a3a"/>
<path d="M522 667V677" stroke="#eee" stroke-width="1.500"/><path d="M531 667 524 672 531 677Z" fill="#eee"/>
<path d="M538 672 543 667 548 672 543 677ZM554 668 549 672 554 676Z" fill="#eee"/>
<path d="M571 666 561 672 571 678Z" fill="#eee"/><path d="M581 666 592 672 581 678Z" fill="#eee"/>
<path d="M599 668 604 672 599 676ZM605 672 610 667 615 672 610 677Z" fill="#eee"/>
<path d="M622 667 629 672 622 677Z" fill="#eee"/><path d="M631 667V677" stroke="#eee" stroke-width="1.500"/>
<rect x="847" y="663" width="73" height="18" rx="4" fill="#545454"/><text class="c" x="882" y="676">40</text>
<rect x="927" y="663" width="192" height="18" rx="4" fill="#545454"/><rect x="927" y="663" width="19" height="18" rx="4" fill="#484848"/><path d="M945.500 663V681M1034.500 663V681" stroke="#3a3a3a"/>
<circle cx="936" cy="673" r="5.500" fill="none" stroke="#ddd"/><path d="M936 670V673H938.500M933 666H939M930 668 932 666M942 668 940 666" fill="none" stroke="#ddd"/>
<text x="961" y="676">Start</text><text class="e" x="1021" y="676">0</text><text x="1050" y="676">End</text><text class="e" x="1105" y="676">210</text>

<!-- status bar -->
<rect x="12" y="686" width="12" height="16" rx="4" fill="none" stroke="#8a8a8a"/><rect x="12.500" y="686.500" width="5.500" height="7" fill="#9a9a9a"/><text class="m" x="29" y="698">Select</text>
<rect x="223" y="686" width="12" height="16" rx="4" fill="none" stroke="#8a8a8a"/><rect x="226.500" y="687.500" width="5" height="8" fill="#9a9a9a"/><text class="m" x="240" y="698">Rotate View</text>
<rect x="435" y="686" width="12" height="16" rx="4" fill="none" stroke="#8a8a8a"/><rect x="441" y="686.500" width="5.500" height="7" fill="#9a9a9a"/><text class="m" x="452" y="698">Object</text>
<text class="m" x="741" y="698" textLength="552">Scene Collection | Armature | Verts:6,143 | Faces:5,923 | Tris:11,934 | Objects:1/2 | Memory: 163.1 MiB |</text>
<g transform="translate(1306,694)" fill="none" stroke="#9a9a9a"><circle r="6"/><path d="M-6 0H6M0-6C-3-2-3 2 0 6 3 2 3-2 0-6M-6-6 6 6"/></g>
<text class="m" x="1317" y="698">| 4.2.0</text>

<!-- popup -->
<rect x="642" y="247" width="251" height="247" rx="4" fill="#141414"/>
<text x="651" y="272">F Idle</text>
<rect x="648" y="279" width="239" height="17" rx="3" fill="#3d3d3d"/><text class="w" x="651" y="291">F Pop Up Action</text>
<rect x="648.500" y="469.500" width="239" height="18" rx="3" fill="#1d1d1d" stroke="#3a3a3a"/>
<circle cx="661" cy="476" r="4.500" fill="none" stroke="#ddd"/><path d="M658 479 653 484" stroke="#ddd" stroke-width="1.200"/>
<path d="M670.500 471V486" stroke="#3a3a3a"/><path d="M675 471V485" stroke="#5a8ad8" stroke-width="1.500"/>
</svg>
</body></html>
